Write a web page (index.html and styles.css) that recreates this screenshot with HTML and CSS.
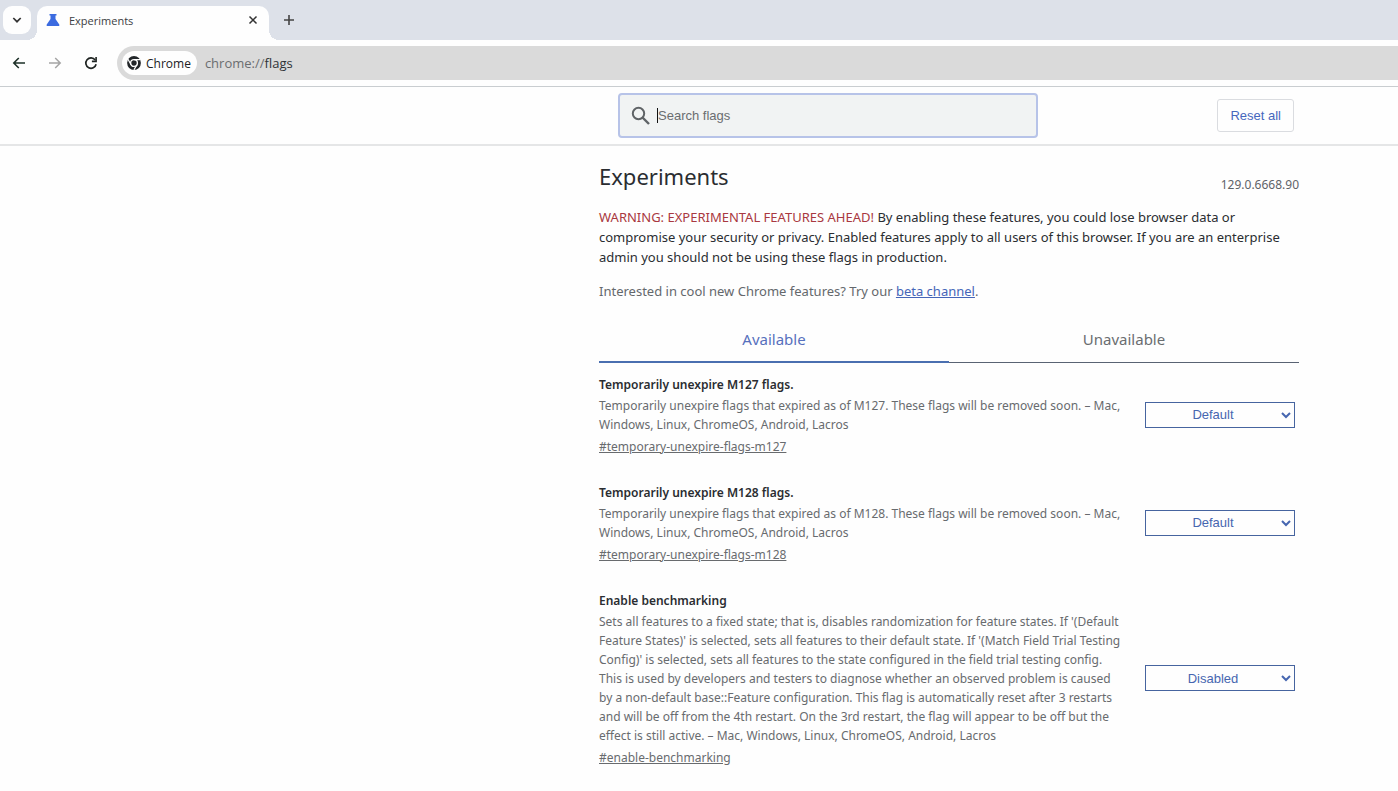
FILE: index.html
```html
<!DOCTYPE html>
<html lang="en">
<head>
<meta charset="utf-8">
<title>Experiments</title>
<link rel="stylesheet" href="styles.css">
</head>
<body>
<div class="tabstrip">
  <button class="tab-search" aria-label="Search tabs"><svg width="12" height="12" viewBox="0 0 12 12"><path d="M2.300 4l3.700 3.700L9.700 4" fill="none" stroke="#333" stroke-width="1.700"/></svg></button>
  <div class="tab">
    <svg width="14" height="14" viewBox="0 0 14 14"><path d="M3.500 1h7v1.600h-1V6l3.600 5.200c.8 1.200.2 1.800-.7 1.800H1.600c-.9 0-1.500-.6-.7-1.800L4.500 6V2.600h-1z" fill="#3b6be0"/></svg>
    <span class="tab-title">Experiments</span>
    <button class="icon-button" aria-label="Close tab"><svg width="10" height="10" viewBox="0 0 10 10"><path d="M1.500 1.500l7 7M8.500 1.500l-7 7" stroke="#333" stroke-width="1.500"/></svg></button>
  </div>
  <button class="icon-button new-tab" aria-label="New tab"><svg width="12" height="12" viewBox="0 0 12 12"><path d="M6 1v10M1 6h10" stroke="#444" stroke-width="1.600"/></svg></button>
</div>
<div class="toolbar">
  <button class="icon-button nav" aria-label="Back"><svg width="14" height="14" viewBox="0 0 14 14"><path d="M13 7H2M6.800 2L1.800 7l5 5" fill="none" stroke="#1d3028" stroke-width="1.600"/></svg></button>
  <button class="icon-button nav" aria-label="Forward"><svg width="14" height="14" viewBox="0 0 14 14"><path d="M1 7h11M7.200 2l5 5-5 5" fill="none" stroke="#a5a5a5" stroke-width="1.500"/></svg></button>
  <button class="icon-button nav" aria-label="Reload"><svg width="14" height="14" viewBox="0 0 14 14"><path d="M12.100 8.300A5.200 5.200 0 1 1 11.200 4" fill="none" stroke="#1f2422" stroke-width="1.700"/><path d="M12.900 1v5.200H7.900V4.600h3.400V1z" fill="#1f2422"/></svg></button>
  <div class="omnibox">
    <button class="chip"><svg width="14" height="14" viewBox="0 0 14 14"><circle cx="7" cy="7" r="6.900" fill="#222629"/><circle cx="7" cy="7" r="3.400" fill="none" stroke="#fff" stroke-width="1.400"/><path d="M7 3.600h6.200M4.060 8.700L1 3.300M9.940 8.700L6.900 13.900" stroke="#fff" stroke-width="1.200"/></svg>Chrome</button>
    <span class="url">chrome://<span class="url-page">flags</span></span>
  </div>
</div>
<header class="header">
  <div class="header-inner">
    <label class="search">
      <svg width="20" height="20" viewBox="0 0 20 20"><circle cx="7.500" cy="7.500" r="5.700" fill="none" stroke="#5f6366" stroke-width="2"/><path d="M11.500 11.500l6.500 6.500" stroke="#5f6366" stroke-width="2.400"/></svg>
      <span class="caret"></span>
      <input type="text" placeholder="Search flags" aria-label="Search flags">
    </label>
    <button class="reset">Reset all</button>
  </div>
</header>
<main class="page">
  <div class="content">
    <div class="title-row"><h1>Experiments</h1><span class="version">129.0.6668.90</span></div>
    <p class="blurb"><span class="warning">WARNING: EXPERIMENTAL FEATURES AHEAD!</span> By enabling these features, you could lose browser data or<br>compromise your security or privacy. Enabled features apply to all users of this browser. If you are an enterprise<br>admin you should not be using these flags in production.</p>
    <p class="promo">Interested in cool new Chrome features? Try our <a href="#beta">beta channel</a>.</p>
    <div class="tabs" role="tablist">
      <button class="page-tab selected" role="tab" aria-selected="true">Available</button>
      <button class="page-tab" role="tab" aria-selected="false">Unavailable</button>
    </div>
    <section class="flag">
      <div class="flag-text">
        <h2>Temporarily unexpire M127 flags.</h2>
        <p>Temporarily unexpire flags that expired as of M127. These flags will be removed soon. – Mac,<br>Windows, Linux, ChromeOS, Android, Lacros</p>
        <a href="#temporary-unexpire-flags-m127">#temporary-unexpire-flags-m127</a>
      </div>
      <select aria-label="Temporarily unexpire M127 flags."><option>Default</option><option>Enabled</option><option>Disabled</option></select>
    </section>
    <section class="flag">
      <div class="flag-text">
        <h2>Temporarily unexpire M128 flags.</h2>
        <p>Temporarily unexpire flags that expired as of M128. These flags will be removed soon. – Mac,<br>Windows, Linux, ChromeOS, Android, Lacros</p>
        <a href="#temporary-unexpire-flags-m128">#temporary-unexpire-flags-m128</a>
      </div>
      <select aria-label="Temporarily unexpire M128 flags."><option>Default</option><option>Enabled</option><option>Disabled</option></select>
    </section>
    <section class="flag">
      <div class="flag-text">
        <h2>Enable benchmarking</h2>
        <p>Sets all features to a fixed state; that is, disables randomization for feature states. If '(Default<br>Feature States)' is selected, sets all features to their default state. If '(Match Field Trial Testing<br>Config)' is selected, sets all features to the state configured in the field trial testing config.<br>This is used by developers and testers to diagnose whether an observed problem is caused<br>by a non-default base::Feature configuration. This flag is automatically reset after 3 restarts<br>and will be off from the 4th restart. On the 3rd restart, the flag will appear to be off but the<br>effect is still active. – Mac, Windows, Linux, ChromeOS, Android, Lacros</p>
        <a href="#enable-benchmarking">#enable-benchmarking</a>
      </div>
      <select aria-label="Enable benchmarking"><option>Disabled</option><option>Enabled</option></select>
    </section>
  </div>
</main>
</body>
</html>
```
FILE: styles.css
```css
* { box-sizing: border-box; }
body {
  margin: 0;
  background: #fefefe;
  color: #2a2d31;
  font-family: "Noto Sans", "Open Sans", sans-serif;
  font-size: 13px;
}
button { font-family: inherit; border: 0; background: none; padding: 0; }
svg { display: block; flex: none; }
h1, h2, p { margin: 0; font-weight: 400; }

.tabstrip, .toolbar { font-family: "Open Sans", sans-serif; }
.tabstrip { display: flex; align-items: flex-start; height: 40px; background: #dde1e9; }
.tab-search {
  display: flex; align-items: center; justify-content: center;
  width: 28px; height: 28px; margin: 6px 6px 0 3px;
  border-radius: 9px; background: #fefefe;
}
.tab {
  position: relative;
  display: flex; align-items: center; gap: 9px;
  width: 232px; height: 34px; margin-top: 6px; padding: 0 11px 6px 9px;
  border-radius: 10px 10px 0 0; background: #fefefe;
}
.tab::before, .tab::after {
  content: ""; position: absolute; bottom: 0; width: 10px; height: 10px;
}
.tab::before { left: -10px; background: radial-gradient(circle at 0 0, transparent 10px, #fefefe 10px); }
.tab::after { right: -10px; background: radial-gradient(circle at 100% 0, transparent 10px, #fefefe 10px); }
.tab-title { flex: 1; font-size: 11px; color: #3c4043; }
.icon-button { display: flex; align-items: center; justify-content: center; }
.new-tab { margin: 14px 0 0 14px; }

.toolbar {
  display: flex; align-items: center;
  height: 47px; padding-left: 12px;
  border-bottom: 1px solid #c9cdd0;
}
.nav { margin-right: 22px; }
.omnibox {
  display: flex; align-items: center; flex: 1; gap: 8px;
  height: 34px; margin-left: -3px; padding-left: 5px;
  border-radius: 17px 0 0 17px; background: #dadada;
}
.chip {
  display: flex; align-items: center; gap: 5px;
  height: 24px; padding: 0 6px 0 5px;
  border-radius: 12px; background: #fefefe;
  font-size: 12px; font-weight: 500; color: #202124;
}
.url { font-size: 13px; color: #6a6d70; }
.url-page { color: #303336; }

.header, .page { display: grid; grid-template-columns: 599fr 700px 99fr; }
.header { height: 59px; border-bottom: 2px solid #e5e6e7; align-items: center; }
.header-inner, .content { grid-column: 2; }
.header-inner { display: flex; align-items: center; justify-content: space-between; padding: 0 5px 0 19px; }
.search {
  display: flex; align-items: center;
  width: 420px; height: 45px; padding-left: 11px;
  border: 2px solid #b7c3e8; border-radius: 4px; background: #f1f3f3;
}
.caret { width: 1px; height: 15px; margin-left: 6px; background: #111; }
.search input {
  flex: 1; padding: 0; border: 0; outline: 0; background: none;
  font: 13px "Liberation Sans", sans-serif;
}
.search input::placeholder { color: #6a6d70; }
.reset {
  height: 33px; padding: 0 12px;
  border: 1px solid #dadce0; border-radius: 3px;
  font: 13px "Liberation Sans", sans-serif; color: #4667bd;
}

.title-row { display: flex; justify-content: space-between; align-items: flex-end; height: 48px; }
h1 { padding-bottom: 2px; font-size: 22px; line-height: 32px; }
.version { font-size: 12px; line-height: 18px; color: #5f6368; }
.blurb { margin-top: 13px; font-size: 13px; line-height: 20px; white-space: nowrap; }
.warning { color: #a93840; }
.promo { margin-top: 14px; line-height: 20px; color: #64686c; }
.promo a { color: #4565b8; }
.tabs { display: flex; height: 46px; margin-top: 16px; border-bottom: 1px solid #596373; }
.page-tab { flex: 1; height: 46px; padding-bottom: 2px; font-size: 15px; color: #6a6d70; }
.selected { padding-bottom: 0; border-bottom: 2px solid #4a6fb0; color: #5670bd; }

.flag { display: flex; align-items: center; justify-content: space-between; margin: 12px 4px 27px 0; }
.flag + .flag { margin-top: 0; }
.flag-text { font-size: 12px; line-height: 19px; color: #686b6e; white-space: nowrap; }
.flag h2 { margin-bottom: 2px; font-size: 12px; font-weight: 600; line-height: 19px; color: #2a2d31; }
.flag a { display: block; width: fit-content; margin-top: 3px; color: #686b6e; }
.flag select {
  width: 150px; height: 26px; margin-bottom: 2px; padding: 0 2px 0 0;
  border: 1px solid #46649f; border-radius: 0; background-color: #fefefe;
  font: 13px "Liberation Sans", sans-serif; color: #4666b0; text-align-last: center;
}
```
